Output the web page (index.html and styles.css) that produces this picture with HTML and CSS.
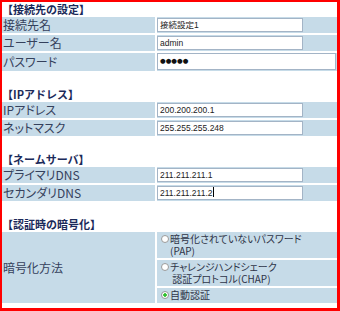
FILE: index.html
```html
<!DOCTYPE html>
<html>
    <head>
        <title>接続先の設定</title>
        <link rel="stylesheet" href="styles.css">
    </head>
    <body>
        <div id="frame">
            <div class="sec">
                <div class="sec_title">【接続先の設定】</div>
                <table class="form">
                    <tr>
                        <td class="label">接続先名</td>
                        <td class="value"><span class="field">接続設定1</span></td>
                    </tr>
                    <tr>
                        <td class="label">ユーザー名</td>
                        <td class="value"><span class="field">admin</span></td>
                    </tr>
                    <tr>
                        <td class="label">パスワード</td>
                        <td class="value"><span class="field wide dots">●●●●●</span></td>
                    </tr>
                </table>
            </div>
            <div class="sec">
                <div class="sec_title">【IPアドレス】</div>
                <table class="form">
                    <tr>
                        <td class="label">IPアドレス</td>
                        <td class="value"><span class="field">200.200.200.1</span></td>
                    </tr>
                    <tr>
                        <td class="label">ネットマスク</td>
                        <td class="value"><span class="field">255.255.255.248</span></td>
                    </tr>
                </table>
            </div>
            <div class="sec">
                <div class="sec_title">【ネームサーバ】</div>
                <table class="form">
                    <tr>
                        <td class="label">プライマリDNS</td>
                        <td class="value"><span class="field">211.211.211.1</span></td>
                    </tr>
                    <tr>
                        <td class="label">セカンダリDNS</td>
                        <td class="value"><span class="field">211.211.211.2<span class="caret"></span></span></td>
                    </tr>
                </table>
            </div>
            <div class="sec">
                <div class="sec_title">【認証時の暗号化】</div>
                <table class="form">
                    <tr>
                        <td class="label" rowspan="3">暗号化方法</td>
                        <td class="opt"><div class="choice"><span class="radio"></span><span>暗号化されていないパスワード<br>(PAP)</span></div></td>
                    </tr>
                    <tr>
                        <td class="opt"><div class="choice"><span class="radio"></span><span>チャレンジハンドシェーク<br>&nbsp;認証プロトコル(CHAP)</span></div></td>
                    </tr>
                    <tr>
                        <td class="opt last"><div class="choice"><span class="radio checked"></span><span>自動認証</span></div></td>
                    </tr>
                </table>
            </div>
        </div>
    </body>
</html>
```

FILE: styles.css
```css
body {
    margin: 0;
    font-family: "Noto Sans CJK JP", sans-serif;
    background-color: #fff;
}
#frame {
    box-sizing: border-box;
    width: 340px;
    height: 311px;
    border: 2px solid #f00;
    border-right-width: 3px;
    border-bottom-width: 3px;
}
.sec + .sec {
    margin-top: 14px;
}
.sec_title {
    height: 15px;
    line-height: 15px;
    font-size: 11px;
    font-weight: bold;
    color: #1b2a5a;
}
table.form {
    width: 100%;
    border-collapse: separate;
    border-spacing: 0;
    table-layout: fixed;
}
.form td {
    padding: 0;
    background-color: #c6dbe8;
    border-bottom: 2px solid #fff;
    font-size: 12px;
    line-height: 16px;
    color: #35415c;
    font-feature-settings: "palt" 1;
}
.form td.label {
    width: 152px;
    padding-left: 1px;
    border-right: 2px solid #fff;
}
.field {
    display: block;
    box-sizing: border-box;
    width: 146px;
    height: 14px;
    margin: 1px 0;
    border: 1px solid #a3b4c6;
    background-color: #fff;
    padding-left: 2px;
    font-family: "Liberation Sans", "Noto Sans CJK JP", sans-serif;
    font-size: 8.5px;
    line-height: 12px;
    color: #222;
}
.field.wide {
    width: 179px;
    height: 17px;
    margin: 0 0 1px;
}
.field.dots {
    font-family: "DejaVu Sans", sans-serif;
    font-size: 6.5px;
    line-height: 15px;
    color: #111;
}
.caret {
    display: inline-block;
    width: 1px;
    height: 10px;
    margin-left: 1px;
    vertical-align: -1px;
    background-color: #000;
}
.form td.opt {
    padding: 1px 0 1px 4px;
    font-size: 10px;
    line-height: 12px;
    color: #2e3447;
}
.form td.opt.last {
    padding-bottom: 2px;
}
.choice {
    display: flex;
    align-items: flex-start;
}
.radio {
    flex: none;
    box-sizing: border-box;
    width: 8px;
    height: 8px;
    margin: 2px 1px 0 0;
    border: 1px solid #9a9a9a;
    border-radius: 50%;
    background-color: #fff;
}
.radio.checked {
    background: radial-gradient(circle, #2fbf2f 0 1.5px, #fff 2px);
}
```
